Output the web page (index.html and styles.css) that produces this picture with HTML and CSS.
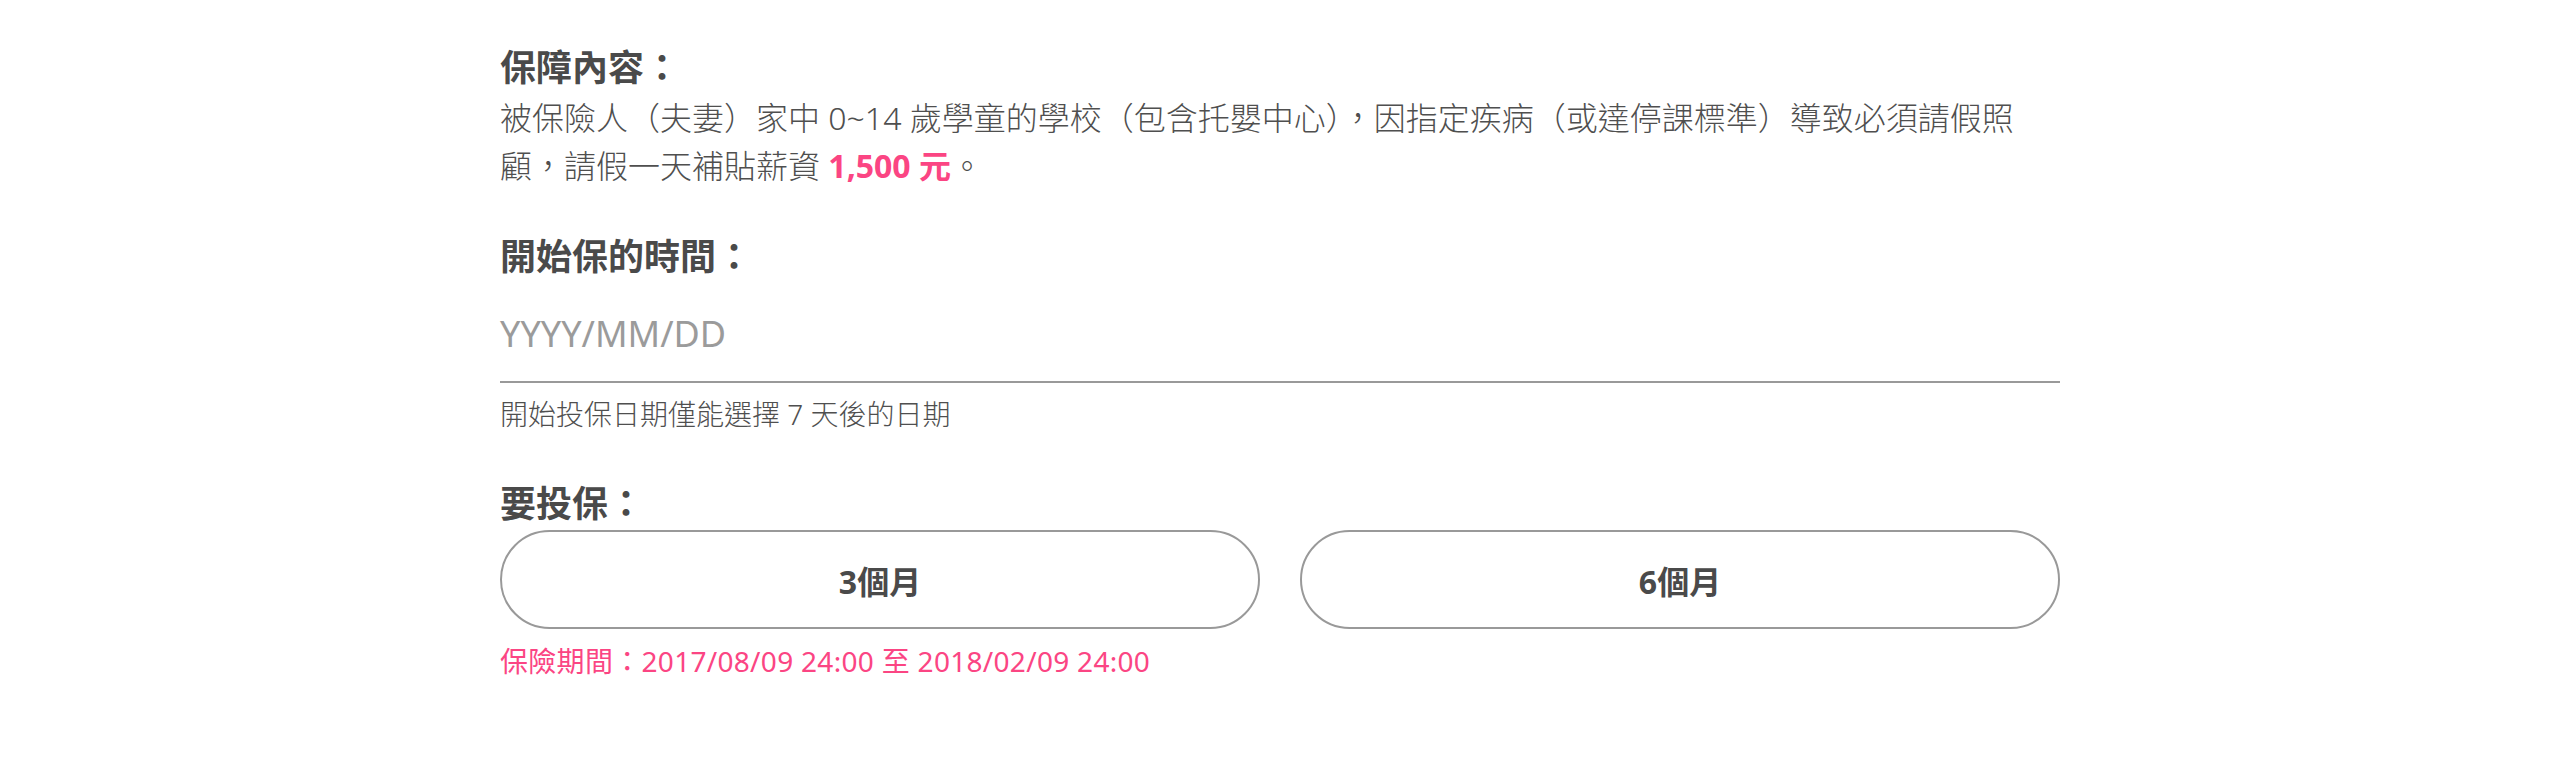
FILE: index.html
```html
<!DOCTYPE html>
<html lang="zh-TW">
<head>
<meta charset="utf-8">
<title>保障內容</title>
<link rel="stylesheet" href="styles.css">
</head>
<body>
<main class="form">
  <section class="block">
    <h2 class="label">保障內容：</h2>
    <p class="desc">被保險人（夫妻）家中 0~14 歲學童的學校（包含托嬰中心），因指定疾病（或達停課標準）導致必須請假照顧，請假一天補貼薪資 <strong class="amount">1,500 元</strong>。</p>
  </section>
  <section class="block block-date">
    <h2 class="label">開始保的時間：</h2>
    <div class="date-field"><span class="placeholder">YYYY/MM/DD</span></div>
    <p class="hint">開始投保日期僅能選擇 7 天後的日期</p>
  </section>
  <section class="block block-plan">
    <h2 class="label">要投保：</h2>
    <div class="options">
      <button class="option" type="button">3個月</button>
      <button class="option" type="button">6個月</button>
    </div>
    <p class="period">保險期間：2017/08/09 24:00 至 2018/02/09 24:00</p>
  </section>
</main>
</body>
</html>
```

FILE: styles.css
```css
* {
  box-sizing: border-box;
}

html, body {
  margin: 0;
  padding: 0;
  background: #ffffff;
}

body {
  font-family: "Noto Sans", "Noto Sans CJK TC", sans-serif;
  color: #555555;
}

.form {
  width: 1560px;
  margin: 0 auto;
  padding-top: 44px;
}

.label {
  margin: 0;
  font-size: 36px;
  line-height: 48px;
  font-weight: 700;
  color: #4a4a4a;
}

.desc {
  margin: 2px 0 0;
  font-size: 32px;
  line-height: 48px;
  font-weight: 300;
  color: #4f4f4f;
}

.amount {
  color: #fb4583;
  font-weight: 700;
}

.block-date {
  margin-top: 43px;
}

.date-field {
  margin-top: 23px;
  padding-bottom: 17px;
  border-bottom: 2px solid #999999;
}

.placeholder {
  display: block;
  font-size: 36px;
  line-height: 60px;
  color: #9b9b9b;
}

.hint {
  margin: 11px 0 0;
  font-size: 28px;
  line-height: 40px;
  font-weight: 300;
  color: #4f4f4f;
}

.block-plan {
  margin-top: 46px;
}

.options {
  margin-top: 2px;
  display: grid;
  grid-template-columns: 1fr 1fr;
  gap: 40px;
}

.option {
  height: 99px;
  border: 2px solid #999999;
  border-radius: 60px;
  background: #ffffff;
  font-family: "Noto Sans", "Noto Sans CJK TC", sans-serif;
  font-size: 32px;
  font-weight: 700;
  color: #4a4a4a;
  padding: 0;
}

.period {
  margin: 12px 0 0;
  font-size: 28px;
  line-height: 40px;
  font-weight: 400;
  letter-spacing: 0.3px;
  color: #fb4583;
}
```
